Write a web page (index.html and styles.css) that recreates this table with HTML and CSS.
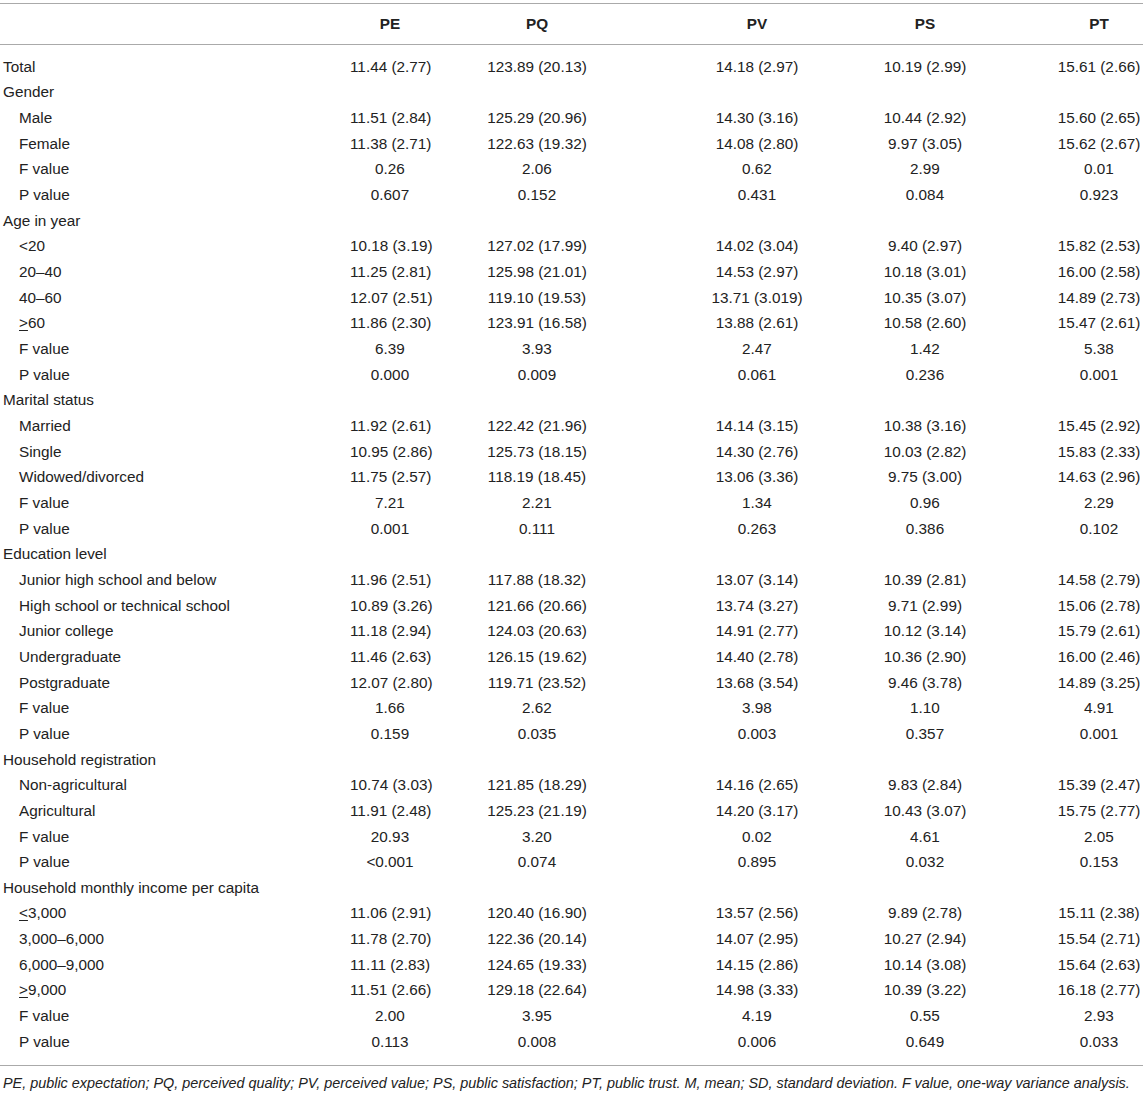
FILE: index.html
```html
<!DOCTYPE html>
<html lang="en">
<head>
    <meta charset="UTF-8">
    <meta name="viewport" content="width=device-width, initial-scale=1.0">
    <title>Table: PE, PQ, PV, PS and PT by demographic characteristics</title>
    <link rel="stylesheet" href="styles.css">
</head>
<body>
    <div class="table-wrap">
        <table class="stats-table">
            <colgroup>
                <col class="col-label">
                <col class="col-pe">
                <col class="col-pq">
                <col class="col-pv">
                <col class="col-ps">
                <col class="col-pt">
            </colgroup>
            <thead>
                <tr>
                    <th></th>
                    <th>PE</th>
                    <th>PQ</th>
                    <th>PV</th>
                    <th>PS</th>
                    <th>PT</th>
                </tr>
            </thead>
            <tbody>
                <tr class="first-row"><td>Total</td><td>11.44 (2.77)</td><td>123.89 (20.13)</td><td>14.18 (2.97)</td><td>10.19 (2.99)</td><td>15.61 (2.66)</td></tr>

                <tr><td>Gender</td><td></td><td></td><td></td><td></td><td></td></tr>
                <tr class="sub"><td>Male</td><td>11.51 (2.84)</td><td>125.29 (20.96)</td><td>14.30 (3.16)</td><td>10.44 (2.92)</td><td>15.60 (2.65)</td></tr>
                <tr class="sub"><td>Female</td><td>11.38 (2.71)</td><td>122.63 (19.32)</td><td>14.08 (2.80)</td><td>9.97 (3.05)</td><td>15.62 (2.67)</td></tr>
                <tr class="sub"><td>F value</td><td>0.26</td><td>2.06</td><td>0.62</td><td>2.99</td><td>0.01</td></tr>
                <tr class="sub"><td>P value</td><td>0.607</td><td>0.152</td><td>0.431</td><td>0.084</td><td>0.923</td></tr>

                <tr><td>Age in year</td><td></td><td></td><td></td><td></td><td></td></tr>
                <tr class="sub"><td>&lt;20</td><td>10.18 (3.19)</td><td>127.02 (17.99)</td><td>14.02 (3.04)</td><td>9.40 (2.97)</td><td>15.82 (2.53)</td></tr>
                <tr class="sub"><td>20–40</td><td>11.25 (2.81)</td><td>125.98 (21.01)</td><td>14.53 (2.97)</td><td>10.18 (3.01)</td><td>16.00 (2.58)</td></tr>
                <tr class="sub"><td>40–60</td><td>12.07 (2.51)</td><td>119.10 (19.53)</td><td>13.71 (3.019)</td><td>10.35 (3.07)</td><td>14.89 (2.73)</td></tr>
                <tr class="sub"><td><u>&gt;</u>60</td><td>11.86 (2.30)</td><td>123.91 (16.58)</td><td>13.88 (2.61)</td><td>10.58 (2.60)</td><td>15.47 (2.61)</td></tr>
                <tr class="sub"><td>F value</td><td>6.39</td><td>3.93</td><td>2.47</td><td>1.42</td><td>5.38</td></tr>
                <tr class="sub"><td>P value</td><td>0.000</td><td>0.009</td><td>0.061</td><td>0.236</td><td>0.001</td></tr>

                <tr><td>Marital status</td><td></td><td></td><td></td><td></td><td></td></tr>
                <tr class="sub"><td>Married</td><td>11.92 (2.61)</td><td>122.42 (21.96)</td><td>14.14 (3.15)</td><td>10.38 (3.16)</td><td>15.45 (2.92)</td></tr>
                <tr class="sub"><td>Single</td><td>10.95 (2.86)</td><td>125.73 (18.15)</td><td>14.30 (2.76)</td><td>10.03 (2.82)</td><td>15.83 (2.33)</td></tr>
                <tr class="sub"><td>Widowed/divorced</td><td>11.75 (2.57)</td><td>118.19 (18.45)</td><td>13.06 (3.36)</td><td>9.75 (3.00)</td><td>14.63 (2.96)</td></tr>
                <tr class="sub"><td>F value</td><td>7.21</td><td>2.21</td><td>1.34</td><td>0.96</td><td>2.29</td></tr>
                <tr class="sub"><td>P value</td><td>0.001</td><td>0.111</td><td>0.263</td><td>0.386</td><td>0.102</td></tr>

                <tr><td>Education level</td><td></td><td></td><td></td><td></td><td></td></tr>
                <tr class="sub"><td>Junior high school and below</td><td>11.96 (2.51)</td><td>117.88 (18.32)</td><td>13.07 (3.14)</td><td>10.39 (2.81)</td><td>14.58 (2.79)</td></tr>
                <tr class="sub"><td>High school or technical school</td><td>10.89 (3.26)</td><td>121.66 (20.66)</td><td>13.74 (3.27)</td><td>9.71 (2.99)</td><td>15.06 (2.78)</td></tr>
                <tr class="sub"><td>Junior college</td><td>11.18 (2.94)</td><td>124.03 (20.63)</td><td>14.91 (2.77)</td><td>10.12 (3.14)</td><td>15.79 (2.61)</td></tr>
                <tr class="sub"><td>Undergraduate</td><td>11.46 (2.63)</td><td>126.15 (19.62)</td><td>14.40 (2.78)</td><td>10.36 (2.90)</td><td>16.00 (2.46)</td></tr>
                <tr class="sub"><td>Postgraduate</td><td>12.07 (2.80)</td><td>119.71 (23.52)</td><td>13.68 (3.54)</td><td>9.46 (3.78)</td><td>14.89 (3.25)</td></tr>
                <tr class="sub"><td>F value</td><td>1.66</td><td>2.62</td><td>3.98</td><td>1.10</td><td>4.91</td></tr>
                <tr class="sub"><td>P value</td><td>0.159</td><td>0.035</td><td>0.003</td><td>0.357</td><td>0.001</td></tr>

                <tr><td>Household registration</td><td></td><td></td><td></td><td></td><td></td></tr>
                <tr class="sub"><td>Non-agricultural</td><td>10.74 (3.03)</td><td>121.85 (18.29)</td><td>14.16 (2.65)</td><td>9.83 (2.84)</td><td>15.39 (2.47)</td></tr>
                <tr class="sub"><td>Agricultural</td><td>11.91 (2.48)</td><td>125.23 (21.19)</td><td>14.20 (3.17)</td><td>10.43 (3.07)</td><td>15.75 (2.77)</td></tr>
                <tr class="sub"><td>F value</td><td>20.93</td><td>3.20</td><td>0.02</td><td>4.61</td><td>2.05</td></tr>
                <tr class="sub"><td>P value</td><td>&lt;0.001</td><td>0.074</td><td>0.895</td><td>0.032</td><td>0.153</td></tr>

                <tr><td>Household monthly income per capita</td><td></td><td></td><td></td><td></td><td></td></tr>
                <tr class="sub"><td><u>&lt;</u>3,000</td><td>11.06 (2.91)</td><td>120.40 (16.90)</td><td>13.57 (2.56)</td><td>9.89 (2.78)</td><td>15.11 (2.38)</td></tr>
                <tr class="sub"><td>3,000–6,000</td><td>11.78 (2.70)</td><td>122.36 (20.14)</td><td>14.07 (2.95)</td><td>10.27 (2.94)</td><td>15.54 (2.71)</td></tr>
                <tr class="sub"><td>6,000–9,000</td><td>11.11 (2.83)</td><td>124.65 (19.33)</td><td>14.15 (2.86)</td><td>10.14 (3.08)</td><td>15.64 (2.63)</td></tr>
                <tr class="sub"><td><u>&gt;</u>9,000</td><td>11.51 (2.66)</td><td>129.18 (22.64)</td><td>14.98 (3.33)</td><td>10.39 (3.22)</td><td>16.18 (2.77)</td></tr>
                <tr class="sub"><td>F value</td><td>2.00</td><td>3.95</td><td>4.19</td><td>0.55</td><td>2.93</td></tr>
                <tr class="sub last-row"><td>P value</td><td>0.113</td><td>0.008</td><td>0.006</td><td>0.649</td><td>0.033</td></tr>
            </tbody>
        </table>
    </div>

    <p class="table-note">PE, public expectation; PQ, perceived quality; PV, perceived value; PS, public satisfaction; PT, public trust. M, mean; SD, standard deviation. F value, one-way variance analysis.</p>
</body>
</html>
```

FILE: styles.css
```css
body {
    font-family: "Liberation Sans", Arial, sans-serif;
    font-size: 15.3px;
    color: #222;
    margin: 0;
    background: #fff;
}
.table-wrap {
    overflow: hidden;
    padding-top: 3px;
}
.stats-table {
    width: 1218px;
    table-layout: fixed;
    border-collapse: collapse;
}
.col-label { width: 350px; }
.col-pe { width: 80px; }
.col-pq { width: 214px; }
.col-pv { width: 226px; }
.col-ps { width: 110px; }
.col-pt { width: 238px; }
.stats-table thead tr {
    border-top: 1px solid #aaa;
    border-bottom: 1px solid #aaa;
}
.stats-table th {
    height: 40px;
    padding: 0;
    font-weight: bold;
    text-align: center;
    vertical-align: middle;
}
.stats-table td {
    height: 25.66px;
    padding: 0;
    text-align: center;
    white-space: nowrap;
    vertical-align: middle;
}
.stats-table td:first-child {
    text-align: left;
    padding-left: 3px;
}
.stats-table .sub td:first-child {
    padding-left: 19px;
}
.stats-table .first-row td {
    padding-top: 9px;
}
.stats-table .last-row td {
    padding-bottom: 10px;
}
.stats-table tbody {
    border-bottom: 1px solid #aaa;
}
.stats-table u {
    text-decoration: underline;
    text-underline-offset: 2px;
}
.table-note {
    margin: 9px 0 0 3px;
    font-size: 14.4px;
    font-style: italic;
    white-space: nowrap;
}
```
